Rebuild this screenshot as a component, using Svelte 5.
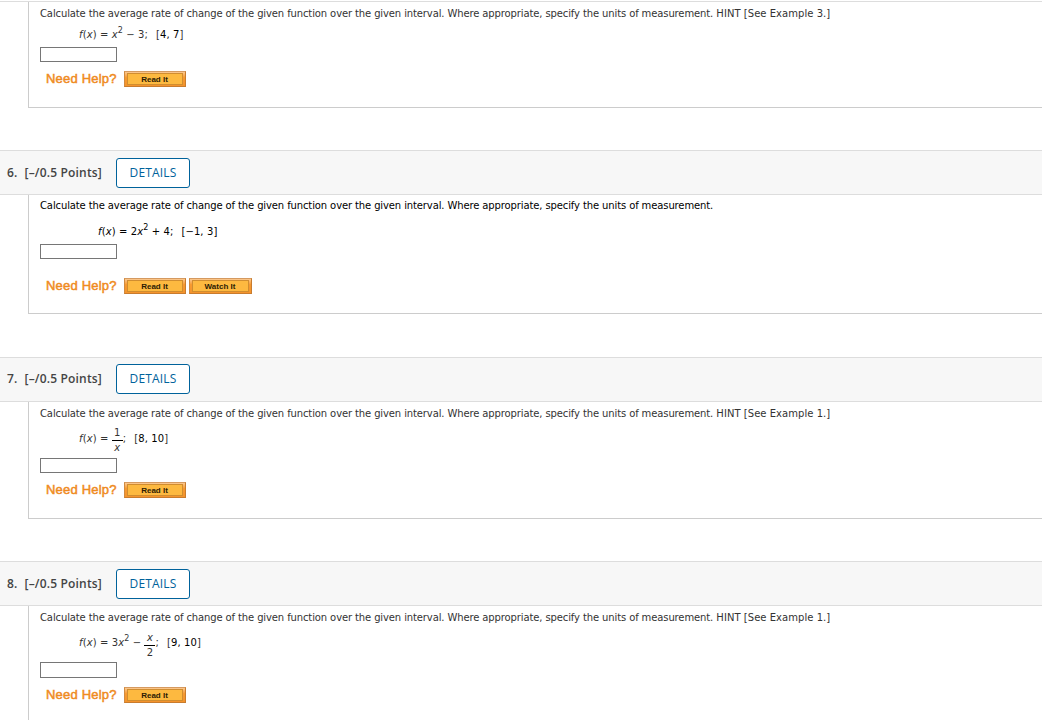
<script>
	const prompt =
		'Calculate the average rate of change of the given function over the given interval. Where appropriate, specify the units of measurement.';

	// the first question is already scrolled past its header
	const questions = [
		{ id: 5, header: false, hint: 3, interval: '4, 7', help: ['Read It'] },
		{ id: 6, header: true, hint: null, interval: '−1, 3', help: ['Read It', 'Watch It'] },
		{ id: 7, header: true, hint: 1, interval: '8, 10', help: ['Read It'] },
		{ id: 8, header: true, hint: 1, interval: '9, 10', help: ['Read It'] }
	];

	let answers = $state({ 5: '', 6: '', 7: '', 8: '' });
</script>

{#snippet frac(top, bottom)}
	<span class="frac">
		<span class:var={top === 'x'}>{top}</span>
		<span class="den" class:var={bottom === 'x'}>{bottom}</span>
	</span>
{/snippet}

<main>
	{#each questions as q (q.id)}
		<section class="question q{q.id}">
			{#if q.header}
				<header>
					<span class="points"><span class="num">{q.id}.</span>[–/0.5 Points]</span>
					<button class="details">DETAILS</button>
				</header>
			{/if}
			<div class="body">
				<p class="prompt">{prompt}{#if q.hint}<span class="hint">{' '}HINT [See Example {q.hint}.]</span>{/if}</p>
				<div class="math">
					<span class="term"><i>f</i>(<i>x</i>) =&nbsp;</span>
					{#if q.id === 5}
						<span class="term"><i>x</i><sup>2</sup> − 3;</span>
					{:else if q.id === 6}
						<span class="term">2<i>x</i><sup>2</sup> + 4;</span>
					{:else if q.id === 7}
						{@render frac('1', 'x')}<span class="term">;</span>
					{:else}
						<span class="term">3<i>x</i><sup>2</sup> −&nbsp;</span>{@render frac('x', '2')}<span class="term">;</span>
					{/if}
					<span class="term interval">[<b>{q.interval}</b>]</span>
				</div>
				<input type="text" aria-label="Answer {q.id}" bind:value={answers[q.id]} />
				<div class="help">
					<span class="need">Need Help?</span>
					{#each q.help as label}
						<button class="help-btn" class:watch={label === 'Watch It'}><span>{label}</span></button>
					{/each}
				</div>
			</div>
		</section>
	{/each}
</main>

<style>
	:global(body) {
		background: #fff;
		overflow: hidden;
	}

	main {
		display: flow-root;
		width: 1042px;
		height: 720px;
		overflow: hidden;
		color: #333;
		font-family: Verdana, 'DejaVu Sans', sans-serif;
		font-size: 10px;
	}

	.question {
		margin-bottom: 42px;
	}

	.q5 {
		border-top: 1px solid #ddd;
		margin-top: 1px;
	}

	header {
		box-sizing: border-box;
		height: 45px;
		padding: 0 7px;
		display: flex;
		align-items: center;
		background: #f7f7f7;
		border-top: 1px solid #ddd;
		border-bottom: 1px solid #ddd;
		font-family: 'Open Sans', sans-serif;
	}

	.points {
		width: 109px;
		font-size: 12px;
		font-weight: 600;
		letter-spacing: 0.18px;
		white-space: nowrap;
		color: #444;
	}

	.num {
		display: inline-block;
		width: 17.5px;
	}

	.details {
		box-sizing: border-box;
		width: 74px;
		height: 30px;
		padding: 0;
		border: 1px solid #00629b;
		border-radius: 3px;
		background: #fff;
		color: #00629b;
		font: 12px/28px 'Open Sans', sans-serif;
		letter-spacing: 0.15px;
	}

	.body {
		margin-left: 28px;
		padding: 5px 0 20px 11px;
		border-left: 1px solid #ccc;
		border-bottom: 1px solid #ccc;
	}

	.prompt {
		margin: 0;
		height: 14px;
		line-height: 14px;
		letter-spacing: -0.117px;
		white-space: nowrap;
	}

	.hint {
		letter-spacing: 0.04px;
	}

	.math {
		display: flex;
		align-items: center;
		box-sizing: border-box;
		height: 26px;
		padding: 1px 0 0 39px;
		line-height: 12px;
		letter-spacing: 0.1px;
		white-space: nowrap;
	}

	.math sup {
		font-size: 8px;
		line-height: 0;
		vertical-align: 5px;
	}

	.math b {
		font-weight: normal;
		color: #000;
	}

	.interval {
		margin-left: 8px;
	}

	.frac {
		display: flex;
		flex-direction: column;
		width: 11px;
		text-align: center;
		line-height: 14px;
	}

	.den {
		border-top: 1px solid #000;
	}

	.var {
		font-style: italic;
	}

	input {
		display: block;
		box-sizing: border-box;
		width: 77px;
		height: 15px;
		padding: 0 2px;
		border: 1px solid #767676;
		border-radius: 0;
		background: #fff;
		font-size: 10px;
	}

	.help {
		display: flex;
		align-items: center;
		height: 16px;
		margin-top: 9px;
		padding-left: 6px;
	}

	.need {
		width: 78px;
		color: #ef8b1f;
		font: 13px/16px 'Liberation Sans', Arial, sans-serif;
		letter-spacing: 0.2px;
		-webkit-text-stroke: 0.5px #ef8b1f;
	}

	.help-btn {
		box-sizing: border-box;
		width: 62px;
		height: 16px;
		margin-right: 3px;
		padding: 1px 2px;
		border: 1px solid;
		border-color: #d59a60 #c87c2e #c87c2e #d08a40;
		background: linear-gradient(#fbc890, #f79a30 40%, #f4932c);
		font: bold 8px/11px 'Liberation Sans', Arial, sans-serif;
		color: #2e1c04;
	}

	.help-btn span {
		display: block;
		height: 10px;
		padding-right: 1px;
		border: 1px solid #d08d30;
		background: #fdb940;
	}

	.watch {
		width: 63px;
	}

	.q6 {
		margin-bottom: 43px;
	}

	.q6 .body {
		padding-top: 4px;
		padding-bottom: 19px;
		color: #000;
	}

	.q6 .math {
		height: 31px;
		padding: 6px 0 0 58px;
	}

	.q6 .help {
		margin-top: 19px;
	}

	.q7 header {
		padding-bottom: 2px;
	}

	.q7 .math,
	.q8 .math {
		height: 37px;
	}

	.q8 .math {
		padding-top: 3px;
	}

	.q7 .term {
		margin-bottom: 3px;
	}

	.q8 .term {
		margin-bottom: 4px;
	}

	.q8 input {
		height: 16px;
	}
</style>
